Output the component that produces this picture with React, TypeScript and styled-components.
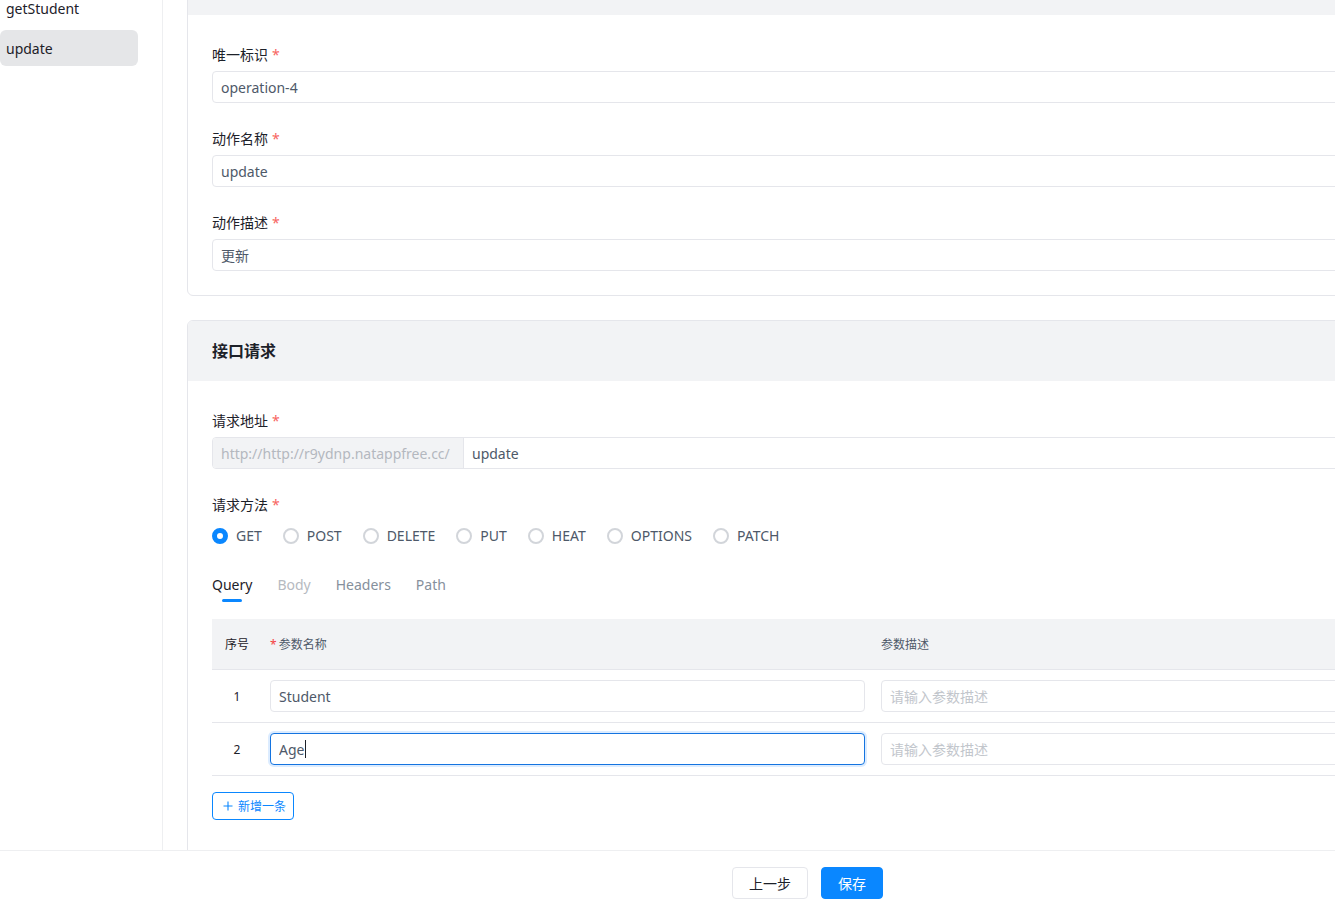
import React, { useLayoutEffect, useRef } from "react";
import styled, { createGlobalStyle, css } from "styled-components";

const BLUE = "#0a87ff";
const BORDER = "#e5e6eb";
const FILL = "#f2f3f5";

const GlobalStyle = createGlobalStyle`
  html, body {
    margin: 0;
    padding: 0;
    overflow: hidden;
    background: #fff;
  }
  body {
    font-family: "Noto Sans", "Noto Sans CJK SC", sans-serif;
    color: #1d2129;
    font-size: 14px;
  }
  * { box-sizing: border-box; }
`;

const methods = ["GET", "POST", "DELETE", "PUT", "HEAT", "OPTIONS", "PATCH"];

const tabs: { label: string; tone: "active" | "muted" | "normal" }[] = [
  { label: "Query", tone: "active" },
  { label: "Body", tone: "muted" },
  { label: "Headers", tone: "normal" },
  { label: "Path", tone: "normal" },
];

const params = [
  { name: "Student", focused: false },
  { name: "Age", focused: true },
];

const actions = [
  { name: "getStudent", active: false },
  { name: "update", active: true },
];

const basicFields = [
  { label: "唯一标识", value: "operation-4" },
  { label: "动作名称", value: "update" },
  { label: "动作描述", value: "更新" },
];

const PlusIcon = () => (
  <svg width="10" height="10" viewBox="0 0 10 10" fill="none">
    <path d="M5 0.5v9M0.5 5h9" stroke="currentColor" strokeWidth="1.1" />
  </svg>
);

const App = () => {
  const scrollRef = useRef<HTMLDivElement>(null);

  // the page is shown scrolled down a little, as in the screenshot
  useLayoutEffect(() => {
    if (scrollRef.current) scrollRef.current.scrollTop = 70;
  }, []);

  return (
    <Page>
      <GlobalStyle />
      <ScrollArea ref={scrollRef}>
        <Row>
          <Sidebar>
            {actions.map((action) => (
              <ActionItem key={action.name} $active={action.active}>
                {action.name}
              </ActionItem>
            ))}
          </Sidebar>

          <Main>
            <Card>
              <CardHeader />
              <CardBody>
                {basicFields.map((field) => (
                  <FormItem key={field.label}>
                    <Label>
                      {field.label}
                      <Required>*</Required>
                    </Label>
                    <Input defaultValue={field.value} />
                  </FormItem>
                ))}
              </CardBody>
            </Card>

            <Card>
              <CardHeader>接口请求</CardHeader>
              <CardBody $bottom={48}>
                <FormItem>
                  <Label>
                    请求地址
                    <Required>*</Required>
                  </Label>
                  <InputGroup>
                    <Addon>http://http://r9ydnp.natappfree.cc/</Addon>
                    <GroupInput defaultValue="update" />
                  </InputGroup>
                </FormItem>

                <FormItem>
                  <Label>
                    请求方法
                    <Required>*</Required>
                  </Label>
                  <RadioGroup>
                    {methods.map((method) => (
                      <Radio key={method}>
                        <RadioCircle $checked={method === "GET"} />
                        {method}
                      </Radio>
                    ))}
                  </RadioGroup>
                </FormItem>

                <div>
                  <TabBar>
                    {tabs.map((tab) => (
                      <Tab key={tab.label} $tone={tab.tone}>
                        {tab.label}
                      </Tab>
                    ))}
                  </TabBar>

                  <Table>
                    <HeadRow>
                      <IndexCell>序号</IndexCell>
                      <Cell>
                        <HeadStar>*</HeadStar>参数名称
                      </Cell>
                      <Cell $last>参数描述</Cell>
                    </HeadRow>

                    {params.map((param, i) => (
                      <BodyRow key={param.name}>
                        <IndexCell>{i + 1}</IndexCell>
                        <Cell>
                          <InputWrap>
                            <Input defaultValue={param.name} $focused={param.focused} />
                            {param.focused && <Caret />}
                          </InputWrap>
                        </Cell>
                        <Cell $last>
                          <Input placeholder="请输入参数描述" />
                        </Cell>
                      </BodyRow>
                    ))}
                  </Table>

                  <AddButton>
                    <PlusIcon />
                    新增一条
                  </AddButton>
                </div>
              </CardBody>
            </Card>
          </Main>
        </Row>
      </ScrollArea>

      <Footer>
        <Button>上一步</Button>
        <Button $primary>保存</Button>
      </Footer>
    </Page>
  );
};

export default App;

const Page = styled.div`
  width: 1615px;
  height: 100vh;
  display: grid;
  grid-template-rows: 850px 66px;
  overflow: hidden;
`;

const ScrollArea = styled.div`
  overflow: hidden;
`;

const Row = styled.div`
  display: flex;
  min-height: 100%;
`;

const Sidebar = styled.aside`
  width: 163px;
  flex-shrink: 0;
  padding: 60px 24px 0 0;
  border-right: 1px solid #eeeff1;
  display: flex;
  flex-direction: column;
  gap: 4px;
`;

const ActionItem = styled.div<{ $active?: boolean }>`
  height: 36px;
  padding: 0 6px;
  display: flex;
  align-items: center;
  border-radius: 6px;
  font-size: 14px;
  color: #1d2129;

  ${({ $active }) =>
    $active &&
    css`
      background: #e5e6e8;
    `}
`;

const Main = styled.main`
  flex: 1;
  padding: 24px 24px 48px;
  display: flex;
  flex-direction: column;
  gap: 24px;
`;

const Card = styled.section`
  border: 1px solid ${BORDER};
  border-radius: 6px;
  overflow: hidden;
  background: #fff;
`;

const CardHeader = styled.div`
  height: 60px;
  padding: 0 24px 2px;
  display: flex;
  align-items: center;
  background: ${FILL};
  font-size: 16px;
  font-weight: 700;
  color: #1d2129;
`;

const CardBody = styled.div<{ $bottom?: number }>`
  padding: 28px 24px ${({ $bottom }) => $bottom ?? 24}px;
  display: flex;
  flex-direction: column;
  gap: 24px;
`;

const FormItem = styled.div`
  display: flex;
  flex-direction: column;
`;

const Label = styled.label`
  line-height: 24px;
  margin-bottom: 4px;
  font-size: 14px;
  color: #1d2129;
`;

const Required = styled.span`
  color: #f76560;
  margin-left: 4px;
`;

const Input = styled.input<{ $focused?: boolean }>`
  width: 100%;
  height: 32px;
  padding: 0 8px;
  border: 1px solid ${BORDER};
  border-radius: 4px;
  outline: none;
  background: #fff;
  font-family: inherit;
  font-size: 14px;
  color: #4e5969;

  &::placeholder {
    color: #c2c6cc;
  }

  ${({ $focused }) =>
    $focused &&
    css`
      border-color: #1474e0;
      box-shadow: 0 0 0 2px #dcecff;
    `}
`;

const InputWrap = styled.div`
  position: relative;
`;

const Caret = styled.span`
  position: absolute;
  left: 35px;
  top: 7px;
  width: 1px;
  height: 18px;
  background: #1d2129;
`;

const InputGroup = styled.div`
  display: flex;
  height: 32px;
  border: 1px solid ${BORDER};
  border-radius: 4px;
  overflow: hidden;
`;

const Addon = styled.div`
  width: 251px;
  flex-shrink: 0;
  padding: 0 8px;
  display: flex;
  align-items: center;
  background: ${FILL};
  border-right: 1px solid ${BORDER};
  color: #b4b8bf;
  font-size: 14px;
  white-space: nowrap;
`;

const GroupInput = styled.input`
  flex: 1;
  border: none;
  outline: none;
  padding: 0 8px;
  font-family: inherit;
  font-size: 14px;
  color: #4e5969;
`;

const RadioGroup = styled.div`
  height: 29px;
  display: flex;
  align-items: center;
  gap: 21px;
`;

const Radio = styled.div`
  display: flex;
  align-items: center;
  gap: 8px;
  font-size: 14px;
  color: #4e5969;
`;

const RadioCircle = styled.span<{ $checked?: boolean }>`
  width: 16px;
  height: 16px;
  border-radius: 50%;
  background: #fff;
  border: 2px solid #d2d5da;

  ${({ $checked }) =>
    $checked &&
    css`
      border: 5px solid ${BLUE};
    `}
`;

const TabBar = styled.div`
  display: flex;
  gap: 25px;
  margin-bottom: 14px;
`;

const Tab = styled.div<{ $tone: "active" | "muted" | "normal" }>`
  position: relative;
  line-height: 22px;
  padding: 0 0 9px;
  font-size: 14px;
  color: ${({ $tone }) =>
    $tone === "active" ? "#1d2129" : $tone === "muted" ? "#b6bac1" : "#86909c"};

  ${({ $tone }) =>
    $tone === "active" &&
    css`
      &::after {
        content: "";
        position: absolute;
        left: 50%;
        bottom: 3px;
        width: 20px;
        height: 3px;
        margin-left: -10px;
        border-radius: 2px;
        background: ${BLUE};
      }
    `}
`;

const Table = styled.div`
  display: flex;
  flex-direction: column;
`;

const tableColumns = css`
  display: grid;
  grid-template-columns: 50px 607px 1fr;
  align-items: center;
  border-bottom: 1px solid ${BORDER};
`;

const HeadRow = styled.div`
  ${tableColumns};
  height: 51px;
  background: ${FILL};
  font-size: 12px;
  color: #4e5969;
`;

const BodyRow = styled.div`
  ${tableColumns};
  height: 53px;
`;

const IndexCell = styled.div`
  text-align: center;
  font-size: 12px;
  color: #1d2129;
`;

const Cell = styled.div<{ $last?: boolean }>`
  padding: ${({ $last }) => ($last ? "0 0 0 12px" : "0 4px 0 8px")};
  display: flex;
  align-items: center;
  font-size: 12px;

  & > * {
    flex: 1;
  }
`;

const HeadStar = styled.span`
  flex: none !important;
  color: #f53f3f;
  margin-right: 2px;
`;

const AddButton = styled.button`
  margin-top: 16px;
  height: 28px;
  padding: 0 7px 0 10px;
  display: inline-flex;
  align-items: center;
  gap: 5px;
  border: 1px solid ${BLUE};
  border-radius: 4px;
  background: #fff;
  color: ${BLUE};
  font-family: inherit;
  font-size: 12px;
`;

const Footer = styled.footer`
  border-top: 1px solid #eeeff1;
  padding: 16px 0;
  display: flex;
  justify-content: center;
  gap: 13px;
  background: #fff;
`;

const Button = styled.button<{ $primary?: boolean }>`
  height: 32px;
  padding: 0 16px;
  border-radius: 4px;
  font-family: inherit;
  font-size: 14px;

  ${({ $primary }) =>
    $primary
      ? css`
          border: 1px solid ${BLUE};
          background: ${BLUE};
          color: #fff;
        `
      : css`
          border: 1px solid ${BORDER};
          background: #fff;
          color: #1d2129;
        `}
`;
